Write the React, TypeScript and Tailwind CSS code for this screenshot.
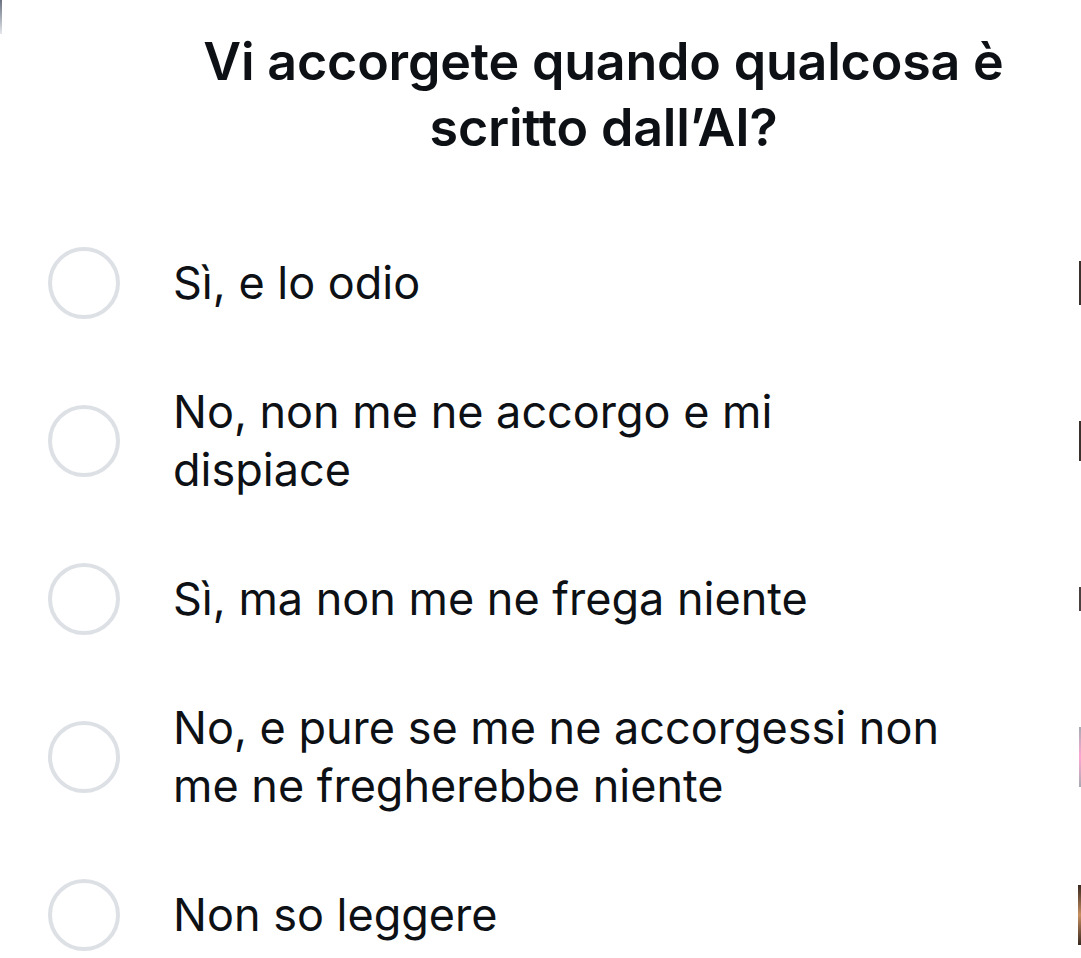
import React from "react";

const options = [
  { text: "Sì, e lo odio", edge: "h-[44px] w-[2px] bg-[#3a302c]" },
  { text: "No, non me ne accorgo e mi dispiace", edge: "h-[40px] w-[2px] bg-[#3a302c]" },
  { text: "Sì, ma non me ne frega niente", edge: "h-[24px] w-[2px] bg-[#4a4040]" },
  {
    text: "No, e pure se me ne accorgessi non me ne fregherebbe niente",
    edge: "h-[60px] w-[2px] bg-gradient-to-b from-gray-500 via-pink-400 to-gray-500 opacity-60",
  },
  { text: "Non so leggere", edge: "h-[60px] w-[3px] bg-gradient-to-b from-[#3a2a20] via-[#c89060] to-[#3a2a20]" },
];

export default function App() {
  return (
    <div
      className="min-h-screen w-full overflow-hidden bg-white text-[#0d1014]"
      style={{ fontFamily: "Inter, 'Noto Sans', sans-serif" }}
    >
      <div className="flex">
        {/* leftover edge of the screenshot */}
        <div className="h-[34px] w-[2px] shrink-0 bg-gradient-to-b from-gray-500 to-gray-200" />
        <div className="flex-1 pl-[124px] pt-[29px]">
          <h1 className="mx-auto w-[900px] text-center text-[52px] font-semibold leading-[66px] tracking-[-0.2px]">
            Vi accorgete quando qualcosa è scritto dall’AI?
          </h1>
        </div>
      </div>

      <ul className="mt-[43px] flex flex-col">
        {options.map((opt, i) => (
          <li key={i} className="flex h-[158px] items-center">
            <div className="ml-[48px] h-[72px] w-[72px] shrink-0 rounded-full border-[4px] border-[#dde0e5]" />
            <span className="ml-[53px] w-[785px] text-[45px] leading-[58px]">{opt.text}</span>
            <div className={`ml-auto shrink-0 ${opt.edge}`} />
          </li>
        ))}
      </ul>
    </div>
  );
}
